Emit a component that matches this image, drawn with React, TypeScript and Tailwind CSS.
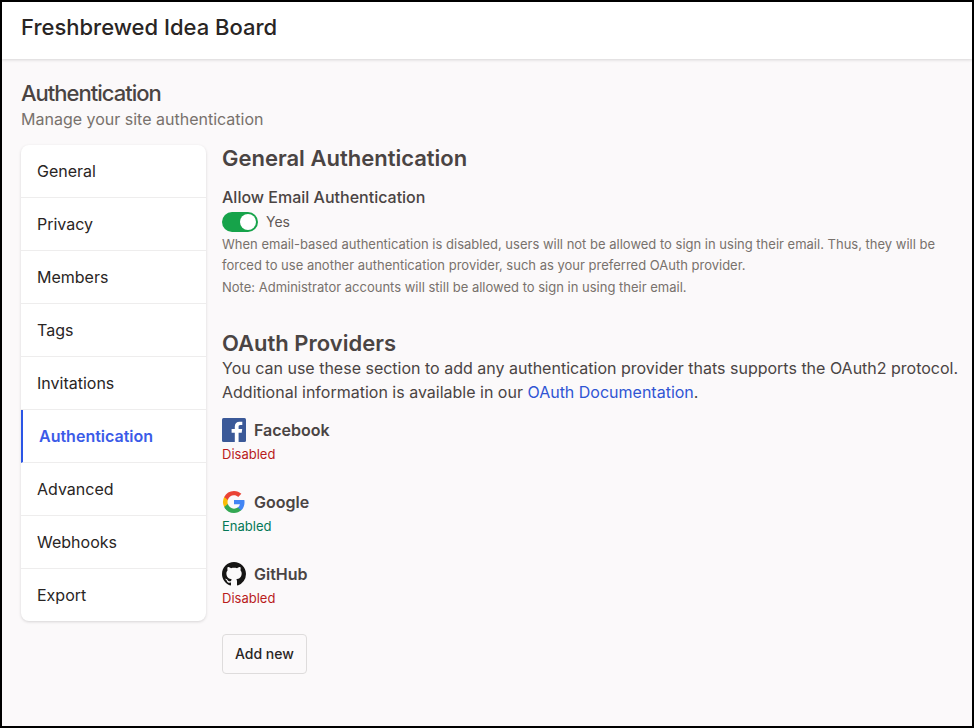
import React from "react";

const items = ["General", "Privacy", "Members", "Tags", "Invitations", "Authentication", "Advanced", "Webhooks", "Export"];

function Facebook() {
  return (
    <svg width="24" height="24" viewBox="0 0 24 24" className="shrink-0">
      <rect width="24" height="24" rx="1.5" fill="#3b5998" />
      <path d="M16.6 24v-9.3h3.1l.5-3.6h-3.6V8.8c0-1 .3-1.8 1.8-1.8h1.9V3.8c-.3 0-1.5-.1-2.8-.1-2.8 0-4.7 1.7-4.7 4.8v2.6H9.6v3.6h3.2V24h3.8z" fill="#fff" />
    </svg>
  );
}

function Google() {
  return (
    <svg width="24" height="24" viewBox="-1.1 -1.1 26.2 26.2" className="shrink-0">
      <path fill="#4285F4" d="M23.5 12.27c0-.85-.08-1.67-.22-2.45H12v4.64h6.45a5.5 5.5 0 0 1-2.39 3.61v3h3.87c2.26-2.09 3.57-5.16 3.57-8.8z" />
      <path fill="#34A853" d="M12 24c3.24 0 5.96-1.07 7.93-2.9l-3.87-3c-1.07.72-2.45 1.15-4.06 1.15-3.13 0-5.78-2.11-6.73-4.95h-4v3.1A12 12 0 0 0 12 24z" />
      <path fill="#FBBC05" d="M5.27 14.3A7.2 7.2 0 0 1 4.9 12c0-.8.14-1.57.37-2.3V6.6h-4a12 12 0 0 0 0 10.8l4-3.1z" />
      <path fill="#EA4335" d="M12 4.75c1.76 0 3.34.6 4.59 1.8l3.43-3.44C17.95 1.19 15.24 0 12 0A12 12 0 0 0 1.27 6.6l4 3.1C6.22 6.86 8.87 4.75 12 4.75z" />
    </svg>
  );
}

function GitHub() {
  return (
    <svg width="24" height="24" viewBox="0 0 16 16" className="shrink-0">
      <path fill="#161514" d="M8 0C3.58 0 0 3.58 0 8c0 3.54 2.29 6.53 5.47 7.59.4.07.55-.17.55-.38 0-.19-.01-.82-.01-1.49-2.01.37-2.53-.49-2.69-.94-.09-.23-.48-.94-.82-1.13-.28-.15-.68-.52-.01-.53.63-.01 1.08.58 1.23.82.72 1.21 1.87.87 2.33.66.07-.52.28-.87.51-1.07-1.78-.2-3.64-.89-3.64-3.95 0-.87.31-1.59.82-2.15-.08-.2-.36-1.02.08-2.12 0 0 .67-.21 2.2.82.64-.18 1.32-.27 2-.27s1.36.09 2 .27c1.53-1.04 2.2-.82 2.2-.82.44 1.1.16 1.92.08 2.12.51.56.82 1.27.82 2.15 0 3.07-1.87 3.75-3.65 3.95.29.25.54.73.54 1.48 0 1.07-.01 1.93-.01 2.2 0 .21.15.46.55.38A8.01 8.01 0 0 0 16 8c0-4.42-3.58-8-8-8z" />
    </svg>
  );
}

function Provider({ icon, name, enabled }: { icon: React.ReactNode; name: string; enabled: boolean }) {
  return (
    <div className="h-[72px]">
      <div className="flex h-6 items-center gap-2">
        {icon}
        <span className="text-base font-semibold text-[#4a4443]">{name}</span>
      </div>
      <div className={`mt-[3px] text-[13px] leading-[18px] ${enabled ? "text-[#047857]" : "text-[#b91c1c]"}`}>
        {enabled ? "Enabled" : "Disabled"}
      </div>
    </div>
  );
}

export default function App() {
  return (
    <div
      className="h-[728px] w-[974px] border-2 border-black bg-[#fbf9fa] text-[#4a4443]"
      style={{ fontFamily: "Inter, 'Liberation Sans', sans-serif" }}
    >
      <header className="flex h-[57px] items-center bg-white pb-2 pl-[19px] shadow-[0_1px_3px_rgba(0,0,0,0.15)]">
        <h1 className="text-[22px] leading-none font-medium text-[#292524]">Freshbrewed Idea Board</h1>
      </header>
      <main className="pl-[19px] pr-2 pt-[19px]">
        <h2 className="text-[22px] leading-[30px] font-medium tracking-[-1px] text-[#4a4443]">Authentication</h2>
        <p className="-mt-px text-base leading-6 text-[#78716c]">Manage your site authentication</p>
        <div className="mt-[14px] flex gap-4">
          <nav className="h-[476px] w-[185px] shrink-0 overflow-hidden rounded-lg bg-white shadow-[0_1px_3px_rgba(0,0,0,0.15)]">
            {items.map((item, i) => {
              const active = item === "Authentication";
              return (
                <div
                  key={item}
                  className={`flex h-[53px] items-center border-b text-base ${i < items.length - 1 ? "border-[#eeeded]" : "border-transparent"} ${
                    active ? "border-l-2 border-l-[#2b55e6] pl-4 font-semibold text-[#3b5be8]" : "pl-4 text-[#292524]"
                  }`}
                >
                  {item}
                </div>
              );
            })}
          </nav>
          <section className="min-w-0 flex-1">
            <h3 className="-mt-px text-[22px] leading-[28px] font-semibold text-[#4a4443]">General Authentication</h3>
            <div className="mt-[14px] text-base leading-[22px] font-medium">Allow Email Authentication</div>
            <div className="mt-[4px] flex h-5 items-center gap-2">
              <div className="flex h-5 w-9 items-center justify-end rounded-full bg-[#16a34a] pr-[2px]">
                <div className="h-4 w-4 rounded-full bg-white" />
              </div>
              <span className="text-sm text-[#5f5856]">Yes</span>
            </div>
            <p className="mt-[2px] text-[13px] leading-[21px] text-[#78716c]">
              When email-based authentication is disabled, users will not be allowed to sign in using their email. Thus, they will be
              forced to use another authentication provider, such as your preferred OAuth provider.
            </p>
            <p className="mt-[1px] text-[13px] leading-[21px] text-[#78716c]">
              Note: Administrator accounts will still be allowed to sign in using their email.
            </p>
            <h3 className="mt-[31px] text-[22px] leading-[28px] font-semibold text-[#4a4443]">OAuth Providers</h3>
            <p className="-mt-px text-base leading-6">
              You can use these section to add any authentication provider thats supports the OAuth2 protocol.
              <br />
              Additional information is available in our <span className="text-[#2f55d4]">OAuth Documentation</span>.
            </p>
            <div className="mt-[14px]">
              <Provider icon={<Facebook />} name="Facebook" enabled={false} />
              <Provider icon={<Google />} name="Google" enabled />
              <Provider icon={<GitHub />} name="GitHub" enabled={false} />
            </div>
            <button className="h-10 rounded border border-[#dedcdc] bg-transparent px-3 text-sm font-medium text-[#292524]">
              Add new
            </button>
          </section>
        </div>
      </main>
    </div>
  );
}
